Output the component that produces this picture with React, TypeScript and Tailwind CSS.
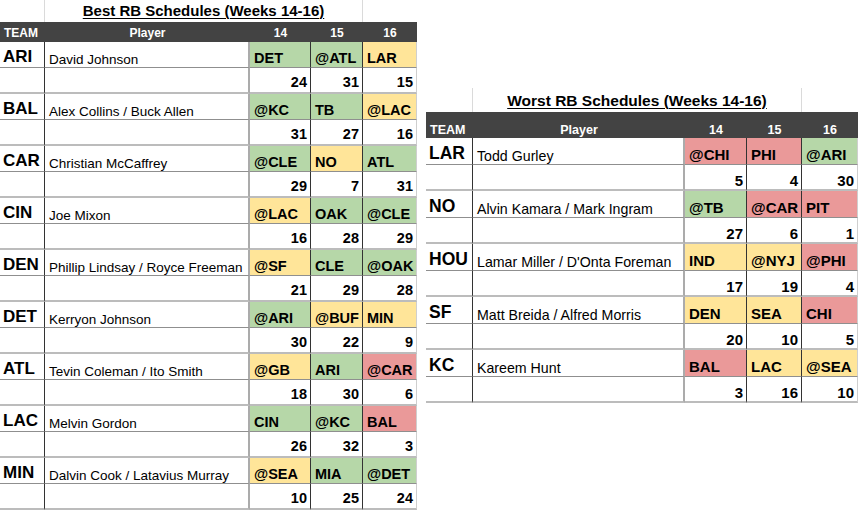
import React from "react";

type C = "g" | "y" | "r";
type Row = { team: string; player: string; opp: [string, C][]; nums: number[] };

const BG: Record<C, string> = {
  g: "bg-[#b6d7a8]",
  y: "bg-[#ffe599]",
  r: "bg-[#ea9999]",
};

const best: Row[] = [
  { team: "ARI", player: "David Johnson", opp: [["DET", "g"], ["@ATL", "g"], ["LAR", "y"]], nums: [24, 31, 15] },
  { team: "BAL", player: "Alex Collins / Buck Allen", opp: [["@KC", "g"], ["TB", "g"], ["@LAC", "y"]], nums: [31, 27, 16] },
  { team: "CAR", player: "Christian McCaffrey", opp: [["@CLE", "g"], ["NO", "y"], ["ATL", "g"]], nums: [29, 7, 31] },
  { team: "CIN", player: "Joe Mixon", opp: [["@LAC", "y"], ["OAK", "g"], ["@CLE", "g"]], nums: [16, 28, 29] },
  { team: "DEN", player: "Phillip Lindsay / Royce Freeman", opp: [["@SF", "y"], ["CLE", "g"], ["@OAK", "g"]], nums: [21, 29, 28] },
  { team: "DET", player: "Kerryon Johnson", opp: [["@ARI", "g"], ["@BUF", "y"], ["MIN", "y"]], nums: [30, 22, 9] },
  { team: "ATL", player: "Tevin Coleman / Ito Smith", opp: [["@GB", "y"], ["ARI", "g"], ["@CAR", "r"]], nums: [18, 30, 6] },
  { team: "LAC", player: "Melvin Gordon", opp: [["CIN", "g"], ["@KC", "g"], ["BAL", "r"]], nums: [26, 32, 3] },
  { team: "MIN", player: "Dalvin Cook / Latavius Murray", opp: [["@SEA", "y"], ["MIA", "g"], ["@DET", "g"]], nums: [10, 25, 24] },
];

const worst: Row[] = [
  { team: "LAR", player: "Todd Gurley", opp: [["@CHI", "r"], ["PHI", "r"], ["@ARI", "g"]], nums: [5, 4, 30] },
  { team: "NO", player: "Alvin Kamara / Mark Ingram", opp: [["@TB", "g"], ["@CAR", "r"], ["PIT", "r"]], nums: [27, 6, 1] },
  { team: "HOU", player: "Lamar Miller / D'Onta Foreman", opp: [["IND", "y"], ["@NYJ", "y"], ["@PHI", "r"]], nums: [17, 19, 4] },
  { team: "SF", player: "Matt Breida / Alfred Morris", opp: [["DEN", "y"], ["SEA", "y"], ["CHI", "r"]], nums: [20, 10, 5] },
  { team: "KC", player: "Kareem Hunt", opp: [["BAL", "r"], ["LAC", "y"], ["@SEA", "y"]], nums: [3, 16, 10] },
];

type Cfg = {
  wrap: string;
  cols: string;
  titleH: string;
  title: string;
  headerH: string;
  header: string;
  teamH: string;
  numH: string;
  teamText: string;
  playerText: string;
  cellText: string;
  numText: string;
};

const leftCfg: Cfg = {
  wrap: "w-[417px] shrink-0",
  cols: "grid-cols-[45px_205px_61px_52px_54px]",
  titleH: "h-[22px]",
  title: "text-[15px] pb-[4px]",
  headerH: "h-[20px]",
  header: "text-[12px] pb-[3px]",
  teamH: "h-[26px]",
  numH: "h-[26px]",
  teamText: "text-[17px] pb-[2px]",
  playerText: "text-[13.5px] pb-[1px]",
  cellText: "text-[14.5px] pb-[2px]",
  numText: "text-[14.5px] pb-[3px]",
};

const rightCfg: Cfg = {
  wrap: "w-[432px] shrink-0 ml-[9px] mt-[88px]",
  cols: "grid-cols-[47px_212px_62px_55px_56px]",
  titleH: "h-[24px]",
  title: "text-[15.5px] pb-[4px]",
  headerH: "h-[26px]",
  header: "text-[12.5px] pb-[2px]",
  teamH: "h-[27px]",
  numH: "h-[26px]",
  teamText: "text-[17.5px] pb-[2px]",
  playerText: "text-[14.2px] pb-[1px]",
  cellText: "text-[15px] pb-[2px]",
  numText: "text-[15px] pb-[1px]",
};

const colRight = ["border-r border-r-[#333]", "border-r border-r-[#333]", "border-r border-r-[#cfcfcf]"];

function Table({ cfg, title, rows }: { cfg: Cfg; title: string; rows: Row[] }) {
  return (
    <div className={cfg.wrap}>
      <div className={`grid ${cfg.cols} ${cfg.titleH}`}>
        <div className="border-r border-r-[#dadada]" />
        <div className={`col-span-3 flex items-end justify-center border-r border-r-[#dadada] ${cfg.title}`}>
          <span className="font-bold leading-none underline decoration-1 underline-offset-[2px] text-black whitespace-nowrap">
            {title}
          </span>
        </div>
        <div />
      </div>
      <div className={`grid ${cfg.cols} ${cfg.headerH} bg-[#434343] text-white font-bold leading-none`}>
        <div className={`flex items-end pl-[4px] ${cfg.header}`}>TEAM</div>
        <div className={`flex items-end justify-center ${cfg.header}`}>Player</div>
        <div className={`flex items-end justify-center ${cfg.header}`}>14</div>
        <div className={`flex items-end justify-center ${cfg.header}`}>15</div>
        <div className={`flex items-end justify-center ${cfg.header}`}>16</div>
      </div>
      {rows.map((r) => (
        <React.Fragment key={r.team}>
          <div className={`grid ${cfg.cols} ${cfg.teamH} leading-none text-black`}>
            <div className={`flex items-end pl-[3px] font-bold border-r border-r-[#333] border-b border-b-[#8f8f8f] ${cfg.teamText}`}>
              {r.team}
            </div>
            <div className={`flex items-end pl-[4px] whitespace-nowrap border-r-2 border-r-[#ababab] border-b border-b-[#8f8f8f] ${cfg.playerText}`}>
              {r.player}
            </div>
            {r.opp.map(([o, c], i) => (
              <div
                key={i}
                className={`flex items-end pl-[4px] font-bold whitespace-nowrap border-b border-b-[#8f8f8f] ${colRight[i]} ${BG[c]} ${cfg.cellText}`}
              >
                {o}
              </div>
            ))}
          </div>
          <div className={`grid ${cfg.cols} ${cfg.numH} leading-none text-black`}>
            <div className="border-r border-r-[#333] border-b-2 border-b-[#bcbcbc]" />
            <div className="border-r-2 border-r-[#ababab] border-b-2 border-b-[#bcbcbc]" />
            {r.nums.map((n, i) => (
              <div
                key={i}
                className={`flex items-end justify-end pr-[3px] font-bold border-b-2 border-b-[#bcbcbc] ${colRight[i]} ${cfg.numText}`}
              >
                {n}
              </div>
            ))}
          </div>
        </React.Fragment>
      ))}
    </div>
  );
}

export default function App() {
  return (
    <div
      className="flex w-[858px] h-[512px] bg-white overflow-hidden"
      style={{ fontFamily: '"Liberation Sans", Arial, Helvetica, sans-serif' }}
    >
      <Table cfg={leftCfg} title="Best RB Schedules (Weeks 14-16)" rows={best} />
      <Table cfg={rightCfg} title="Worst RB Schedules (Weeks 14-16)" rows={worst} />
    </div>
  );
}
